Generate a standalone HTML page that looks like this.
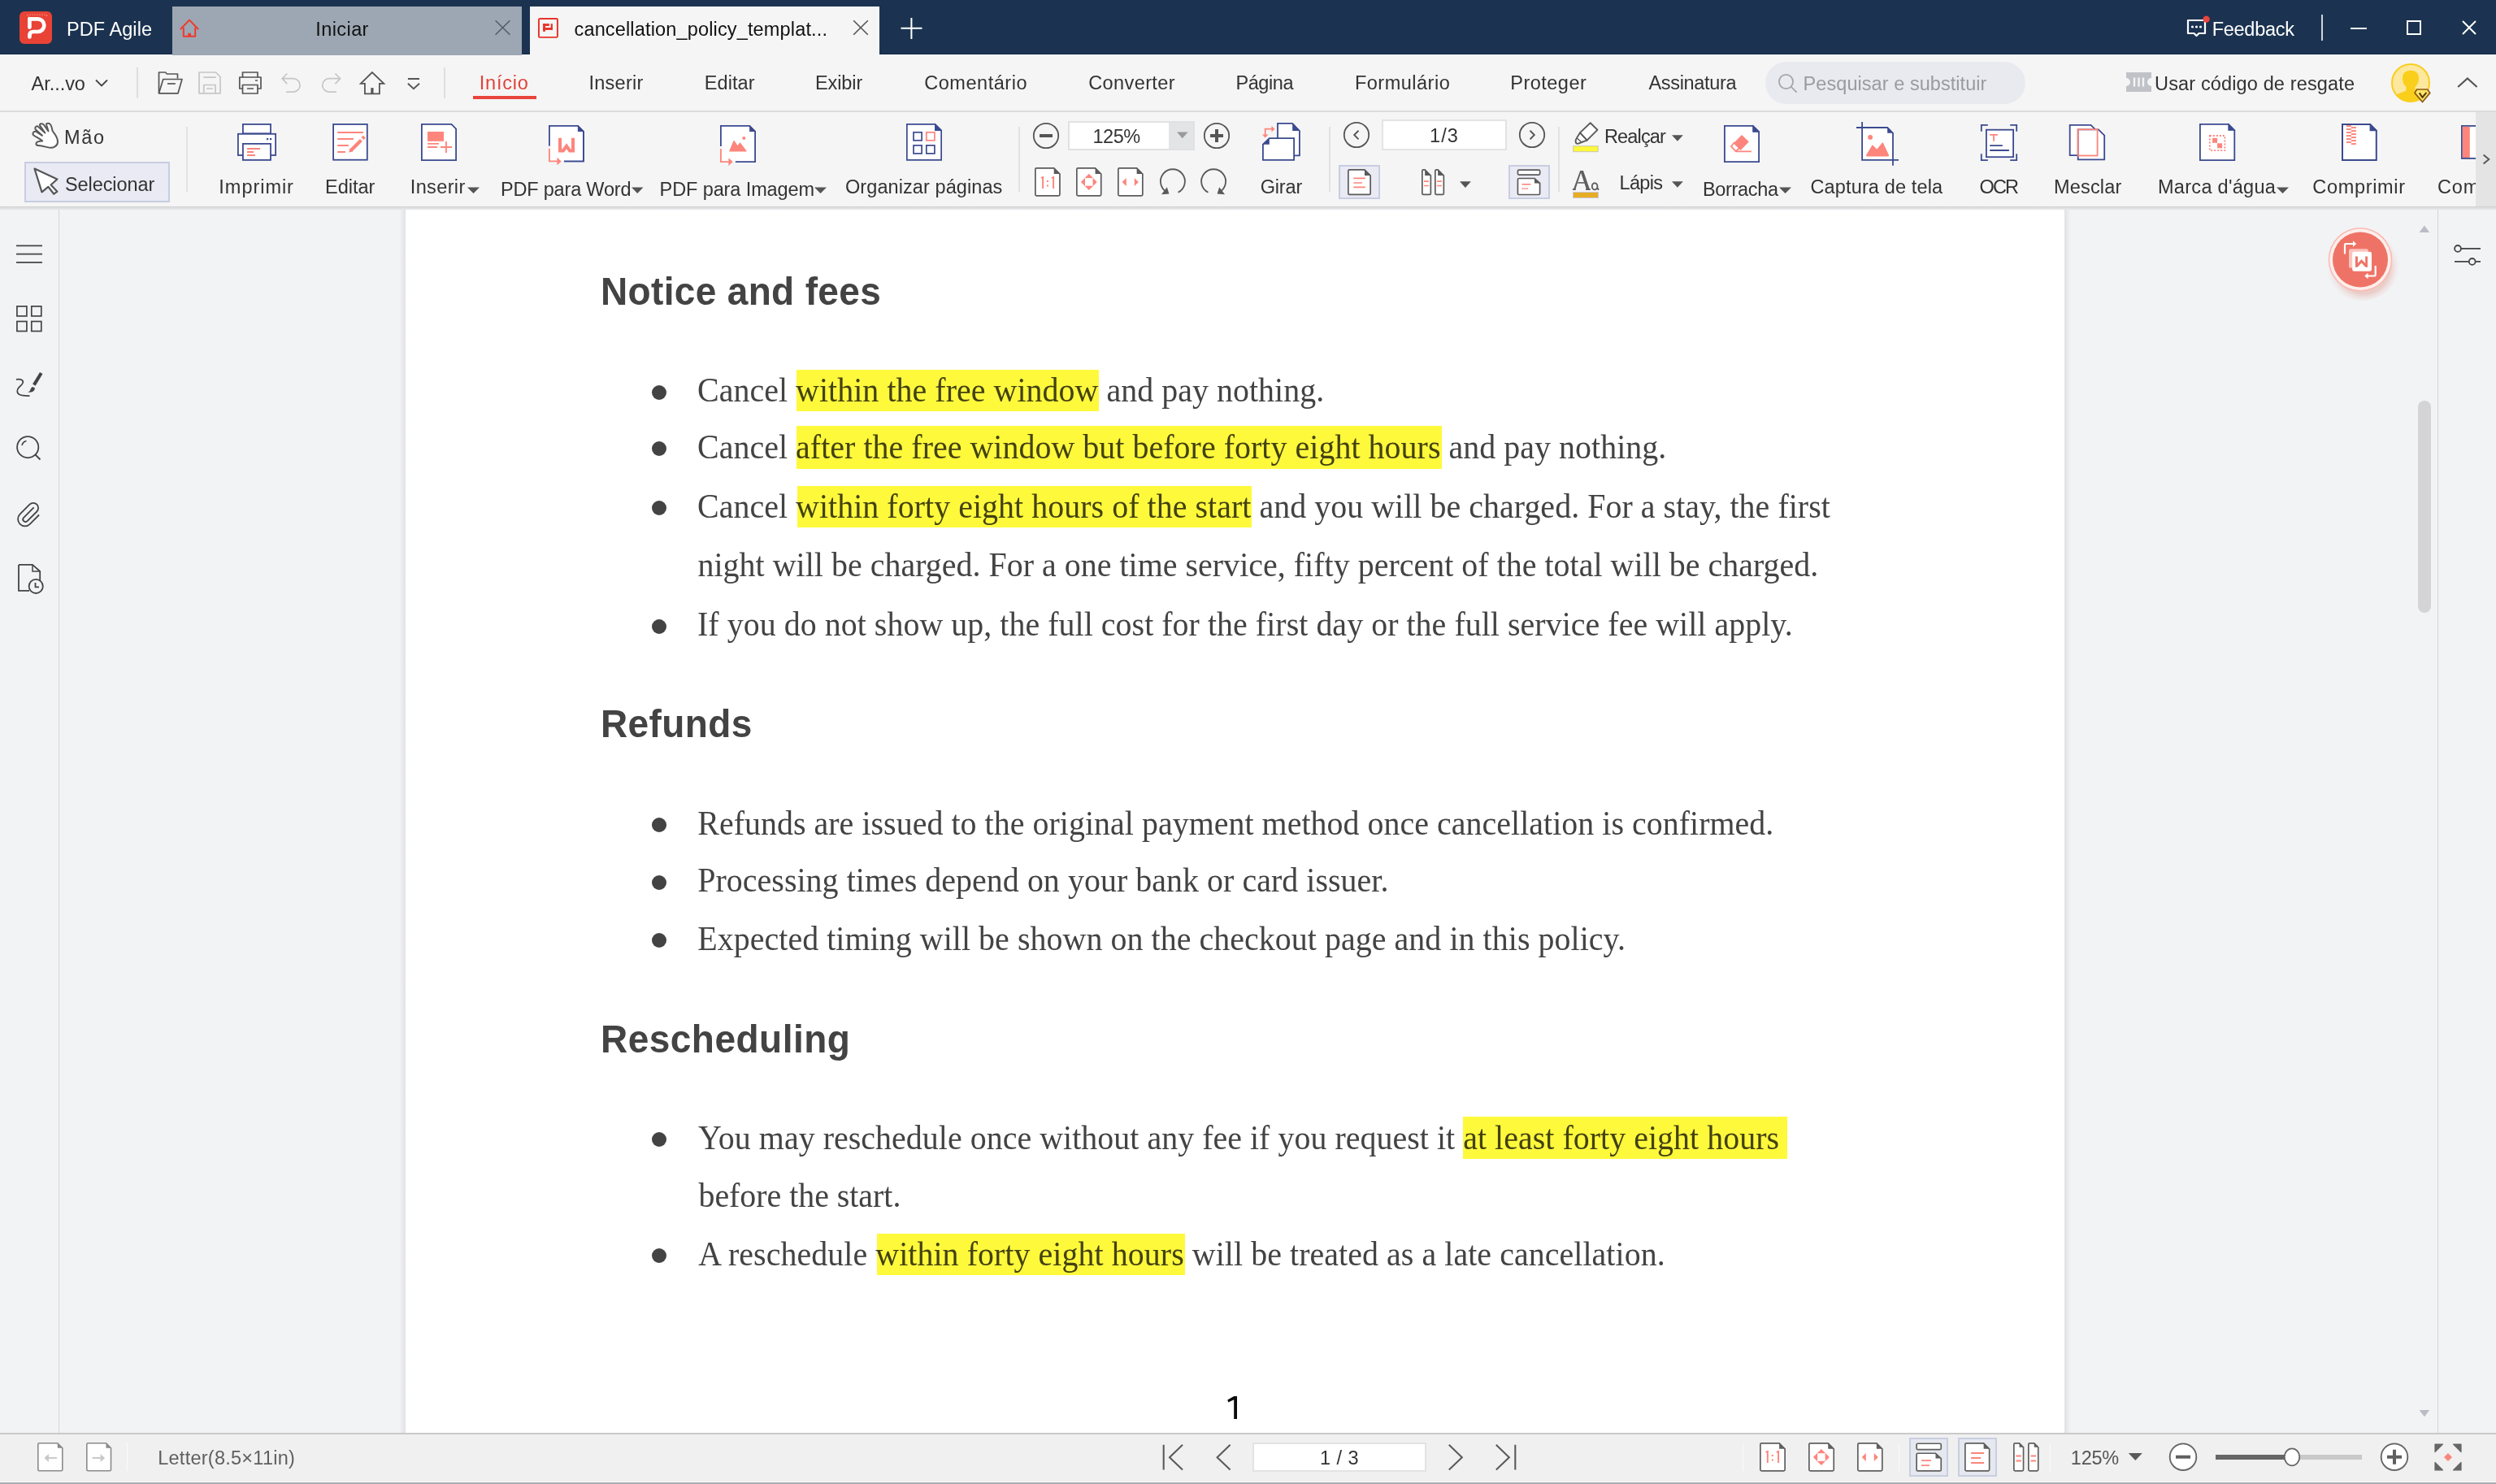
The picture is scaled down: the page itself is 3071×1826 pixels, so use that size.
<!DOCTYPE html>
<html><head><meta charset="utf-8"><style>
html,body{margin:0;padding:0;width:3071px;height:1826px;overflow:hidden;background:#f2f3f5;position:relative}
body>div,body>svg{position:absolute}
svg{overflow:visible}
</style></head><body>
<div style="left:0px;top:0px;width:3071px;height:67px;background:#1b3350;"></div>
<div style="left:0px;top:66px;width:3071px;height:1px;background:#13294a;"></div>
<div style="left:0px;top:67px;width:3071px;height:1px;background:#f0f2f4;"></div>
<svg style="left:24px;top:14px;" width="40" height="40" viewBox="0 0 40 40" fill="none"><rect width="40" height="40" rx="6" fill="#e84335"/><path d="M12.4 9.4 H22.5 A7.8 7.8 0 0 1 22.5 25 H17.2 Q12.4 25 12.4 29.8 V31.4" stroke="#fff" stroke-width="4.7" stroke-linecap="round" stroke-linejoin="round"/><path d="M12.4 9.4 V19.6" stroke="#fff" stroke-width="4.7" stroke-linecap="round"/><g fill="#fff" opacity=".8"><circle cx="10" cy="4.8" r=".6"/><circle cx="13" cy="4" r=".6"/><circle cx="16" cy="4" r=".6"/><circle cx="19" cy="4" r=".6"/><circle cx="22" cy="4" r=".6"/><circle cx="25" cy="4" r=".6"/><circle cx="28" cy="4" r=".6"/><circle cx="31" cy="4" r=".6"/><circle cx="33.5" cy="5.2" r=".6"/><circle cx="11.5" cy="7" r=".6"/></g></svg>
<div style="left:82.00px;top:24.53px;font-family:'Liberation Sans', sans-serif;font-size:23.5px;line-height:23.5px;font-weight:normal;color:#ffffff;white-space:nowrap;letter-spacing:0.062px;">PDF Agile</div>
<div style="left:212px;top:8px;width:430px;height:60px;background:#9da7b3;"></div>
<svg style="left:220px;top:22px;" width="26" height="26" viewBox="0 0 26 26" fill="none"><path d="M2.5 13.5 L13 2.6 L23.6 13.5" stroke="#ee3a2c" stroke-width="2" stroke-linecap="round" stroke-linejoin="round"/><path d="M5.8 12 V22.8 H20.2 V12" stroke="#ee3a2c" stroke-width="2" stroke-linejoin="round"/><rect x="11.2" y="18.8" width="3.8" height="4" fill="#ee3a2c"/></svg>
<div style="left:388.35px;top:24.53px;font-family:'Liberation Sans', sans-serif;font-size:23.5px;line-height:23.5px;font-weight:normal;color:#111111;white-space:nowrap;letter-spacing:0.400px;">Iniciar</div>
<svg style="left:608px;top:24px;" width="21" height="20" viewBox="0 0 21 20" fill="none"><path d="M1.6 1.2 L19.4 18.8 M19.4 1.2 L1.6 18.8" stroke="#555c66" stroke-width="1.6"/></svg>
<div style="left:652px;top:8px;width:430px;height:60px;background:#f5f5f5;"></div>
<svg style="left:661px;top:21px;" width="27" height="27" viewBox="0 0 27 27" fill="none"><rect x="1.95" y="1.95" width="23" height="22.9" rx="1.3" stroke="#e8342a" stroke-width="1.95"/><g fill="#e8342a"><rect x="7.1" y="8.1" width="7.7" height="2.9"/><rect x="7.1" y="8.1" width="2.9" height="9.7"/><rect x="16.7" y="8.1" width="2.2" height="7.8"/><rect x="7.1" y="13" width="11.8" height="2.9"/></g></svg>
<div style="left:706.50px;top:24.53px;font-family:'Liberation Sans', sans-serif;font-size:23.5px;line-height:23.5px;font-weight:normal;color:#111111;white-space:nowrap;letter-spacing:0.155px;">cancellation_policy_templat...</div>
<svg style="left:1049px;top:24px;" width="20" height="20" viewBox="0 0 20 20" fill="none"><path d="M1.2 1.2 L18.8 18.8 M18.8 1.2 L1.2 18.8" stroke="#555" stroke-width="1.6"/></svg>
<svg style="left:1107px;top:21px;" width="29" height="28" viewBox="0 0 29 28" fill="none"><path d="M14.4 1 V27 M1.5 13.8 H27.5" stroke="#fff" stroke-width="2"/></svg>
<svg style="left:2689px;top:19px;" width="30" height="26" viewBox="0 0 30 26" fill="none"><path d="M3 6 H24 V22 H16.5 L13.5 25 L10.5 22 H3 Z" stroke="#fff" stroke-width="2.2" stroke-linejoin="round"/><circle cx="8.5" cy="14" r="1.6" fill="#fff"/><circle cx="13.5" cy="14" r="1.6" fill="#fff"/><circle cx="18.5" cy="14" r="1.6" fill="#fff"/><circle cx="25.6" cy="4.6" r="4.2" fill="#e8453c"/></svg>
<div style="left:2721.70px;top:24.53px;font-family:'Liberation Sans', sans-serif;font-size:23.5px;line-height:23.5px;font-weight:normal;color:#ffffff;white-space:nowrap;letter-spacing:-0.279px;">Feedback</div>
<div style="left:2856px;top:18px;width:2px;height:32px;background:#d0d4da;"></div>
<div style="left:2892px;top:34px;width:20px;height:2px;background:#ffffff;"></div>
<svg style="left:2961px;top:25px;" width="18" height="18" viewBox="0 0 18 18" fill="none"><rect x="1" y="1" width="16" height="16" stroke="#fff" stroke-width="2"/></svg>
<svg style="left:3029px;top:25px;" width="18" height="18" viewBox="0 0 18 18" fill="none"><path d="M1 1 L17 17 M17 1 L1 17" stroke="#fff" stroke-width="2"/></svg>
<div style="left:0px;top:68px;width:3071px;height:68px;background:#f5f5f5;"></div>
<div style="left:0px;top:136px;width:3071px;height:2px;background:#dcdcdc;"></div>
<div style="left:38.50px;top:91.83px;font-family:'Liberation Sans', sans-serif;font-size:23.5px;line-height:23.5px;font-weight:normal;color:#333;white-space:nowrap;letter-spacing:-0.033px;">Ar...vo</div>
<svg style="left:116px;top:96px;" width="18" height="12" viewBox="0 0 18 12" fill="none"><path d="M2 2.5 L9 9.5 L16 2.5" stroke="#444" stroke-width="1.8"/></svg>
<div style="left:168px;top:83px;width:2px;height:38px;background:#dedede;"></div>
<svg style="left:192px;top:86px;" width="36" height="32" viewBox="0 0 36 32" fill="none"><path d="M3.5 28.5 V3 H11.5 L13.5 5 H26.5 V10.5" stroke="#555555" stroke-width="1.7" stroke-linejoin="round"/><path d="M3.5 28.8 L8.8 11.5 H32 L27 28.8 Z" stroke="#555555" stroke-width="1.7" stroke-linejoin="round"/><path d="M14 17 H23.8" stroke="#555555" stroke-width="1.7"/></svg>
<svg style="left:242px;top:86px;" width="32" height="32" viewBox="0 0 32 32" fill="none"><path d="M3 3 H23.5 L29 8.5 V28.8 H3 Z" stroke="#c6c6c6" stroke-width="1.7" stroke-linejoin="round"/><path d="M8.3 9.2 H23.8 M8.8 28.8 V18.5 H23 V28.8 M12 23 H20" stroke="#c6c6c6" stroke-width="1.7"/></svg>
<svg style="left:292px;top:86px;" width="32" height="32" viewBox="0 0 32 32" fill="none"><path d="M6.5 9.5 V3 H25 V9.5" stroke="#555555" stroke-width="1.7" stroke-linejoin="round"/><path d="M6.5 23 H2.8 V9 H29 V23 H25" stroke="#555555" stroke-width="1.7" stroke-linejoin="round"/><path d="M6.5 18.5 H25 V29 H6.5 Z" stroke="#555555" stroke-width="1.7" stroke-linejoin="round"/><path d="M12 23 H20 M22 13 H25" stroke="#555555" stroke-width="1.7"/></svg>
<svg style="left:340px;top:86px;" width="30" height="32" viewBox="0 0 30 32" fill="none"><path d="M13.3 4.5 L7.2 10.7 L13.3 17.2 M7.2 10.7 H20.9 A8.2 8.2 0 0 1 20.9 27.1 H12.3" stroke="#c6c6c6" stroke-width="1.7"/></svg>
<svg style="left:390px;top:86px;" width="32" height="32" viewBox="0 0 32 32" fill="none"><path d="M22.4 4.5 L28.6 10.7 L22.4 17.2 M28.6 10.7 H14.9 A8.2 8.2 0 0 0 14.9 27.1 H23.9" stroke="#c6c6c6" stroke-width="1.7"/></svg>
<svg style="left:440px;top:86px;" width="36" height="32" viewBox="0 0 36 32" fill="none"><path d="M3.8 16.9 L17.9 3 L32.3 16.9 H26.9 V29.3 H8.9 V16.9 Z" stroke="#555555" stroke-width="1.8" stroke-linejoin="miter"/><rect x="16.3" y="22.1" width="3.2" height="7.2" fill="#555555"/></svg>
<svg style="left:498px;top:90px;" width="22" height="24" viewBox="0 0 22 24" fill="none"><path d="M3.9 7 H18 M3.9 12.7 L10.9 19.2 L18 12.7" stroke="#555555" stroke-width="1.9"/></svg>
<div style="left:546px;top:83px;width:2px;height:38px;background:#dedede;"></div>
<div style="left:589.75px;top:90.53px;font-family:'Liberation Sans', sans-serif;font-size:23.5px;line-height:23.5px;font-weight:normal;color:#e0443a;white-space:nowrap;letter-spacing:0.790px;">Início</div>
<div style="left:582px;top:118px;width:78px;height:4px;background:#e8453c;"></div>
<div style="left:724.45px;top:90.53px;font-family:'Liberation Sans', sans-serif;font-size:23.5px;line-height:23.5px;font-weight:normal;color:#333;white-space:nowrap;letter-spacing:0.275px;">Inserir</div>
<div style="left:866.80px;top:90.53px;font-family:'Liberation Sans', sans-serif;font-size:23.5px;line-height:23.5px;font-weight:normal;color:#333;white-space:nowrap;letter-spacing:0.060px;">Editar</div>
<div style="left:1003.00px;top:90.53px;font-family:'Liberation Sans', sans-serif;font-size:23.5px;line-height:23.5px;font-weight:normal;color:#333;white-space:nowrap;letter-spacing:-0.100px;">Exibir</div>
<div style="left:1137.25px;top:90.53px;font-family:'Liberation Sans', sans-serif;font-size:23.5px;line-height:23.5px;font-weight:normal;color:#333;white-space:nowrap;letter-spacing:0.528px;">Comentário</div>
<div style="left:1339.15px;top:90.53px;font-family:'Liberation Sans', sans-serif;font-size:23.5px;line-height:23.5px;font-weight:normal;color:#333;white-space:nowrap;letter-spacing:0.412px;">Converter</div>
<div style="left:1520.40px;top:90.53px;font-family:'Liberation Sans', sans-serif;font-size:23.5px;line-height:23.5px;font-weight:normal;color:#333;white-space:nowrap;letter-spacing:-0.420px;">Página</div>
<div style="left:1666.90px;top:90.53px;font-family:'Liberation Sans', sans-serif;font-size:23.5px;line-height:23.5px;font-weight:normal;color:#333;white-space:nowrap;letter-spacing:0.506px;">Formulário</div>
<div style="left:1858.30px;top:90.53px;font-family:'Liberation Sans', sans-serif;font-size:23.5px;line-height:23.5px;font-weight:normal;color:#333;white-space:nowrap;letter-spacing:0.479px;">Proteger</div>
<div style="left:2028.50px;top:90.53px;font-family:'Liberation Sans', sans-serif;font-size:23.5px;line-height:23.5px;font-weight:normal;color:#333;white-space:nowrap;letter-spacing:-0.333px;">Assinatura</div>
<div style="left:2172px;top:76px;width:320px;height:52px;background:#e9eaf0;border-radius:26px;"></div>
<svg style="left:2186px;top:89px;" width="28" height="28" viewBox="0 0 28 28" fill="none"><circle cx="11.5" cy="11.5" r="8.6" stroke="#a4a6ad" stroke-width="1.8"/><path d="M17.6 17.6 L24.6 24.6" stroke="#a4a6ad" stroke-width="1.9"/></svg>
<div style="left:2218.60px;top:91.62px;font-family:'Liberation Sans', sans-serif;font-size:23.5px;line-height:23.5px;font-weight:normal;color:#9a9a9f;white-space:nowrap;letter-spacing:0.055px;">Pesquisar e substituir</div>
<svg style="left:2614px;top:87px;" width="36" height="28" viewBox="0 0 36 28" fill="none"><path d="M2 2 H33 V9 A5 5 0 0 0 33 19 V26 H2 V19 A5 5 0 0 0 2 9 Z" fill="#c0c2c8"/><path d="M12 8.5 V19.5 M17.5 8.5 V19.5 M23 8.5 V19.5" stroke="#f5f5f5" stroke-width="2.4"/></svg>
<div style="left:2651.05px;top:91.83px;font-family:'Liberation Sans', sans-serif;font-size:23.5px;line-height:23.5px;font-weight:normal;color:#333;white-space:nowrap;letter-spacing:0.140px;">Usar código de resgate</div>
<svg style="left:2940px;top:76px;" width="54" height="54" viewBox="0 0 54 54" fill="none"><defs><pattern id="dp" width="2.9" height="2.9" patternUnits="userSpaceOnUse"><circle cx="1.45" cy="1.45" r=".5" fill="#f9d867"/></pattern><clipPath id="avc"><circle cx="26" cy="26" r="23"/></clipPath></defs><circle cx="26" cy="26" r="23" fill="#fde9a3" stroke="#f9cd1d" stroke-width="2"/><circle cx="26" cy="26" r="22" fill="url(#dp)"/><path clip-path="url(#avc)" d="M20.5 35.4 V31 C17 28 16 24 16 20 C16 14 20 10.8 26 10.8 C32 10.8 36 14 36 20 C36 24 35 28 31.5 31 V35.4 L46 40 L48 54 H4 L6 41.5 Z" fill="#f9cf1c"/><path d="M33.6 34 H46.6 L49.8 38.4 L40.5 49.5 L31 38.4 Z" fill="#fde46a" stroke="#8b5a10" stroke-width="1.7" stroke-linejoin="round"/><path d="M36.7 38.3 L40.5 43.8 L45.4 37.8" stroke="#5b3a08" stroke-width="2.1" fill="none"/></svg>
<svg style="left:3022px;top:94px;" width="28" height="16" viewBox="0 0 28 16" fill="none"><path d="M2.2 13 L13.9 2.4 L25.6 13" stroke="#555" stroke-width="2.2"/></svg>
<div style="left:0px;top:138px;width:3071px;height:116px;background:#f5f5f5;"></div>
<div style="left:0px;top:254px;width:3071px;height:1px;background:#d0d0d0;"></div>
<div style="left:0;top:255px;width:3071px;height:3px;background:linear-gradient(#dcdddf,#e6e7e9)"></div>
<svg style="left:36px;top:146px;" width="40" height="40" viewBox="0 0 40 40" fill="none"><path d="M22.9 5.8 C26 5 27.5 9 28.6 15.1 C30 17.5 35 22 35 28.5 C35 33.5 30 36 25.6 35.8 C22 35.6 18 33.6 13.5 33.2 C10 33 8.4 33 8.4 31 C8.4 28.5 11.5 27.5 16.2 27.5 C13 24.5 8 22.5 5.4 20.5 C3.5 18.8 4.8 15 8.5 16 L15.9 20.8 L7.5 12.9 C6.5 10.5 9 8.5 10.8 9.7 L19.4 17.5 L12.9 8.1 C12.5 6.2 16 5.5 17.8 7.5 L23.5 15.4 L21 7.3 C20.8 6.3 21.8 5.8 22.9 5.8 Z" fill="#fff" stroke="#5a5a5a" stroke-width="2" stroke-linejoin="round"/></svg>
<div style="left:79.00px;top:158.03px;font-family:'Liberation Sans', sans-serif;font-size:23.5px;line-height:23.5px;font-weight:normal;color:#333;white-space:nowrap;letter-spacing:1.625px;">Mão</div>
<div style="left:30px;top:199px;width:179px;height:50px;background:#e9eaf3;box-sizing:border-box;border:2px solid #c8cde2;"></div>
<svg style="left:38px;top:204px;" width="36" height="38" viewBox="0 0 36 38" fill="none"><path d="M4.5 3.5 L32.4 16.5 L24.6 23.5 L32.4 31.7 L28.3 34.7 L21.3 25.8 L13.5 32.4 Z" fill="#fff" stroke="#555" stroke-width="2.2" stroke-linejoin="round"/></svg>
<div style="left:80.00px;top:215.83px;font-family:'Liberation Sans', sans-serif;font-size:23.5px;line-height:23.5px;font-weight:normal;color:#333;white-space:nowrap;letter-spacing:-0.083px;">Selecionar</div>
<div style="left:229px;top:156px;width:2px;height:80px;background:#e2e2e2;"></div>
<svg style="left:290px;top:150px;" width="52" height="50" viewBox="0 0 52 50" fill="none"><rect x="8.9" y="2.9" width="34.1" height="11.4" fill="#fff" stroke="#3b4a8f" stroke-width="1.8"/><rect x="2.9" y="14.8" width="46.2" height="26.2" fill="#fff" stroke="#3b4a8f" stroke-width="1.8"/><rect x="8.9" y="26.9" width="34.1" height="20" fill="#fff" stroke="#3b4a8f" stroke-width="1.8"/><rect x="38" y="20" width="2.2" height="2.2" fill="#3b4a8f"/><rect x="42" y="20" width="2.2" height="2.2" fill="#3b4a8f"/><path d="M14 33 H30 M14 37 H22 M14 41 H24" stroke="#fd857c" stroke-width="1.9"/></svg>
<div style="left:269.35px;top:219.22px;font-family:'Liberation Sans', sans-serif;font-size:23.5px;line-height:23.5px;font-weight:normal;color:#333;white-space:nowrap;letter-spacing:0.964px;">Imprimir</div>
<svg style="left:406px;top:150px;" width="50" height="50" viewBox="0 0 50 50" fill="none"><rect x="4.1" y="2.9" width="41.7" height="43.8" fill="#fff" stroke="#3b4a8f" stroke-width="1.8"/><path d="M9.2 12.9 H40.9 M9.2 21 H28.9 M9.2 28.9 H22.9 M9.2 37 H18.9" stroke="#fd857c" stroke-width="2"/><path d="M25.6 35.2 L38.4 22.4" stroke="#fd857c" stroke-width="4.2"/><path d="M23.2 37.6 L24.4 32.6 L28.2 36.4 Z" fill="#fd857c"/><path d="M40 20.6 L42.4 18.2" stroke="#fd857c" stroke-width="4.2"/></svg>
<div style="left:400.00px;top:219.22px;font-family:'Liberation Sans', sans-serif;font-size:23.5px;line-height:23.5px;font-weight:normal;color:#333;white-space:nowrap;letter-spacing:0.000px;">Editar</div>
<svg style="left:516px;top:150px;" width="48" height="50" viewBox="0 0 48 50" fill="none"><path d="M2.8999999999999773 2.9000000000000057 H39.50000000000002 L45.10000000000002 8.500000000000005 V47.099999999999994 H2.8999999999999773 Z" fill="#fff" stroke="#3b4a8f" stroke-width="1.8" stroke-linejoin="miter"/><rect x="10" y="12" width="20" height="11.8" fill="#fd857c"/><path d="M10 26.900000000000006 H24 M10 31 H22 M26 31 H40 M32.89999999999998 24 V38" stroke="#fd857c" stroke-width="1.9"/></svg>
<div style="left:504.75px;top:219.22px;font-family:'Liberation Sans', sans-serif;font-size:23.5px;line-height:23.5px;font-weight:normal;color:#333;white-space:nowrap;letter-spacing:0.375px;">Inserir</div>
<svg style="left:574.5px;top:230px;" width="15.0" height="9" viewBox="0 0 15.0 9" fill="none"><path d="M0 0.5 H15.0 L7.5 8 Z" fill="#555"/></svg>
<svg style="left:673px;top:152.3px;" width="49.799999999999955" height="53.29999999999998" viewBox="0 0 49.799999999999955 53.29999999999998" fill="none"><path d="M2.8999999999999773 2.9000000000000057 H37.89999999999998 L44.89999999999998 9.900000000000006 V46.39999999999998 H20.899999999999977" fill="none" stroke="#3b4a8f" stroke-width="1.8"/><path d="M1.9999999999999774 2.9000000000000057 H37.89999999999998 L44.89999999999998 9.900000000000006 V46.39999999999998 H2.8999999999999773 Z" fill="#fff" stroke="none"/><path d="M2.8999999999999773 2.9000000000000057 H37.89999999999998 L44.89999999999998 9.900000000000006 V46.39999999999998 H20.899999999999977" fill="none" stroke="#3b4a8f" stroke-width="1.8"/><path d="M2.8999999999999773 2.0000000000000058 V27.649999999999977" stroke="#3b4a8f" stroke-width="1.8"/><path d="M37.89999999999998 2.9000000000000057 L44.89999999999998 9.900000000000006 H37.89999999999998 Z" fill="#3b4a8f"/><path d="M2.8999999999999773 30.649999999999977 V46.39999999999998 H12.899999999999977" stroke="#fd857c" stroke-width="1.8"/><path d="M12.399999999999977 41.799999999999976 L17.699999999999978 46.39999999999998 L12.399999999999977 51.199999999999974 Z" fill="#fd857c"/><path d="M16 17.69999999999999 V33.5 H20 L24 27.69999999999999 L28 33.5 H32 V17.69999999999999" stroke="#fd857c" stroke-width="4" fill="none" stroke-linejoin="miter"/></svg>
<div style="left:615.90px;top:221.53px;font-family:'Liberation Sans', sans-serif;font-size:23.5px;line-height:23.5px;font-weight:normal;color:#333;white-space:nowrap;letter-spacing:-0.179px;">PDF para Word</div>
<svg style="left:776.5px;top:230px;" width="14.5" height="9" viewBox="0 0 14.5 9" fill="none"><path d="M0 0.5 H14.5 L7.25 8 Z" fill="#555"/></svg>
<svg style="left:884px;top:152px;" width="50" height="54" viewBox="0 0 50 54" fill="none"><path d="M2.8999999999999773 2.9000000000000057 H38.10000000000002 L45.10000000000002 9.900000000000006 V47.099999999999994 H20.899999999999977" fill="none" stroke="#3b4a8f" stroke-width="1.8"/><path d="M1.9999999999999774 2.9000000000000057 H38.10000000000002 L45.10000000000002 9.900000000000006 V47.099999999999994 H2.8999999999999773 Z" fill="#fff" stroke="none"/><path d="M2.8999999999999773 2.9000000000000057 H38.10000000000002 L45.10000000000002 9.900000000000006 V47.099999999999994 H20.899999999999977" fill="none" stroke="#3b4a8f" stroke-width="1.8"/><path d="M2.8999999999999773 2.0000000000000058 V28.0" stroke="#3b4a8f" stroke-width="1.8"/><path d="M38.10000000000002 2.9000000000000057 L45.10000000000002 9.900000000000006 H38.10000000000002 Z" fill="#3b4a8f"/><path d="M2.8999999999999773 31.0 V47.099999999999994 H12.899999999999977" stroke="#fd857c" stroke-width="1.8"/><path d="M12.399999999999977 42.49999999999999 L17.699999999999978 47.099999999999994 L12.399999999999977 51.89999999999999 Z" fill="#fd857c"/><path d="M13.799999999999955 33.900000000000006 L19 21.599999999999994 L23.5 28 L26.5 24 L34 33.900000000000006 Z" fill="#fd857c" stroke="#fd857c" stroke-width="1.2" stroke-linejoin="round"/><circle cx="31.299999999999955" cy="17.900000000000006" r="2" fill="#fd857c"/></svg>
<div style="left:811.60px;top:221.53px;font-family:'Liberation Sans', sans-serif;font-size:23.5px;line-height:23.5px;font-weight:normal;color:#333;white-space:nowrap;letter-spacing:-0.107px;">PDF para Imagem</div>
<svg style="left:1001.5px;top:230px;" width="15.0" height="9" viewBox="0 0 15.0 9" fill="none"><path d="M0 0.5 H15.0 L7.5 8 Z" fill="#555"/></svg>
<svg style="left:1113px;top:150.2px;" width="48" height="49.80000000000001" viewBox="0 0 48 49.80000000000001" fill="none"><path d="M2.849999999999909 2.8499999999999943 H37.55000000000009 L45.15000000000009 10.449999999999994 V46.95000000000002 H2.849999999999909 Z" fill="#fff" stroke="#3b4a8f" stroke-width="1.7" stroke-linejoin="miter"/><path d="M37.55000000000009 2.8499999999999943 L45.15000000000009 10.449999999999994 H37.55000000000009 Z" fill="#3b4a8f" stroke="#3b4a8f" stroke-width="1.02" stroke-linejoin="miter"/><rect x="11" y="12.800000000000011" width="10.1" height="10" stroke="#3b4a8f" stroke-width="1.7"/><rect x="26.799999999999955" y="12.800000000000011" width="10.1" height="10" stroke="#fd857c" stroke-width="1.7"/><rect x="11" y="28.900000000000006" width="10.1" height="10" stroke="#3b4a8f" stroke-width="1.7"/><rect x="26.799999999999955" y="28.900000000000006" width="10.1" height="10" stroke="#3b4a8f" stroke-width="1.7"/></svg>
<div style="left:1040.00px;top:219.22px;font-family:'Liberation Sans', sans-serif;font-size:23.5px;line-height:23.5px;font-weight:normal;color:#333;white-space:nowrap;letter-spacing:0.078px;">Organizar páginas</div>
<div style="left:1253px;top:156px;width:2px;height:80px;background:#e2e2e2;"></div>
<svg style="left:1269px;top:149px;" width="36" height="36" viewBox="0 0 36 36" fill="none"><circle cx="18" cy="18" r="15.2" fill="none" stroke="#555" stroke-width="1.8"/><path d="M10 18 H26" stroke="#555" stroke-width="4"/></svg>
<div style="left:1314px;top:149px;width:156px;height:36px;background:#e3e4e6;box-sizing:border-box;border:2px solid #e1e1e3;"></div>
<div style="left:1316px;top:151px;width:122px;height:32px;background:#ffffff;"></div>
<svg style="left:1448px;top:162px;" width="14" height="9" viewBox="0 0 14 9" fill="none"><path d="M0 0.5 H13.6 L6.8 8.2 Z" fill="#9a9a9a"/></svg>
<div style="left:1344.55px;top:156.83px;font-family:'Liberation Sans', sans-serif;font-size:23.5px;line-height:23.5px;font-weight:normal;color:#333;white-space:nowrap;letter-spacing:-0.500px;">125%</div>
<svg style="left:1479px;top:149px;" width="36" height="36" viewBox="0 0 36 36" fill="none"><circle cx="18" cy="18" r="15.2" fill="none" stroke="#555" stroke-width="1.8"/><path d="M10 18 H26 M18 10 V26" stroke="#555" stroke-width="4"/></svg>
<svg style="left:1271.1px;top:204px;" width="35.80000000000018" height="39.69999999999999" viewBox="0 0 35.80000000000018 39.69999999999999" fill="none"><path d="M4.349999999999909 2.8499999999999943 H25.750000000000274 L32.95000000000027 10.049999999999994 V35.349999999999994 Q32.95000000000027 36.849999999999994 31.450000000000273 36.849999999999994 H4.349999999999909 Q2.849999999999909 36.849999999999994 2.849999999999909 35.349999999999994 V4.349999999999994 Q2.849999999999909 2.8499999999999943 4.349999999999909 2.8499999999999943 Z" fill="#fff" stroke="#5a5a5a" stroke-width="1.7"/><path d="M25.750000000000274 2.8499999999999943 L32.95000000000027 10.049999999999994 H25.750000000000274 Z" fill="#5a5a5a"/><path d="M9.900000000000091 15 L12.100000000000136 14 V28 M22.90000000000009 15 L25.100000000000136 14 V28" stroke="#fd857c" stroke-width="1.9"/><rect x="16.90000000000009" y="18" width="2" height="2" fill="#fd857c"/><rect x="16.90000000000009" y="23.5" width="2" height="2" fill="#fd857c"/></svg>
<svg style="left:1322.2px;top:204px;" width="35.59999999999991" height="39.69999999999999" viewBox="0 0 35.59999999999991 39.69999999999999" fill="none"><path d="M4.349999999999909 2.8499999999999943 H25.55 L32.75 10.049999999999994 V35.349999999999994 Q32.75 36.849999999999994 31.25 36.849999999999994 H4.349999999999909 Q2.849999999999909 36.849999999999994 2.849999999999909 35.349999999999994 V4.349999999999994 Q2.849999999999909 2.8499999999999943 4.349999999999909 2.8499999999999943 Z" fill="#fff" stroke="#5a5a5a" stroke-width="1.7"/><path d="M25.55 2.8499999999999943 L32.75 10.049999999999994 H25.55 Z" fill="#5a5a5a"/><path d="M17.799999999999955 9.800000000000011 L27.700000000000045 19.900000000000006 L17.799999999999955 30 L7.899999999999864 19.900000000000006 Z" fill="#fd857c"/><rect x="13.0" y="15.099999999999994" width="9.6" height="9.6" fill="#fff"/></svg>
<svg style="left:1373.2px;top:204px;" width="35.700000000000045" height="39.69999999999999" viewBox="0 0 35.700000000000045 39.69999999999999" fill="none"><path d="M4.349999999999909 2.8499999999999943 H25.650000000000137 L32.850000000000136 10.049999999999994 V35.349999999999994 Q32.850000000000136 36.849999999999994 31.350000000000136 36.849999999999994 H4.349999999999909 Q2.849999999999909 36.849999999999994 2.849999999999909 35.349999999999994 V4.349999999999994 Q2.849999999999909 2.8499999999999943 4.349999999999909 2.8499999999999943 Z" fill="#fff" stroke="#5a5a5a" stroke-width="1.7"/><path d="M25.650000000000137 2.8499999999999943 L32.850000000000136 10.049999999999994 H25.650000000000137 Z" fill="#5a5a5a"/><path d="M12.799999999999955 15 L7.599999999999909 20 L12.799999999999955 25 Z M22.799999999999955 15 L27.799999999999955 20 L22.799999999999955 25 Z" fill="#fd857c"/></svg>
<svg style="left:1424px;top:205px;" width="38" height="38" viewBox="0 0 38 38" fill="none"><path d="M12.3 31.7 A15 15 0 1 1 25.5 31.7" stroke="#5a5a5a" stroke-width="1.8" fill="none"/><path d="M5 34.3 L14.4 33.4 L11.8 25.2 Z" fill="#5a5a5a"/></svg>
<svg style="left:1474px;top:205px;" width="38" height="38" viewBox="0 0 38 38" fill="none"><path d="M25.7 31.7 A15 15 0 1 0 12.5 31.7" stroke="#5a5a5a" stroke-width="1.8" fill="none"/><path d="M33 34.3 L23.6 33.4 L26.2 25.2 Z" fill="#5a5a5a"/></svg>
<svg style="left:1550px;top:148px;" width="54" height="54" viewBox="0 0 54 54" fill="none"><path d="M22 3.9 H40.2 L48.9 13 V43.4 H22 Z" fill="#fff" stroke="#3b4a8f" stroke-width="1.8"/><path d="M40.2 3.9 L48.9 13 H40.2 Z" fill="#3b4a8f"/><path d="M11.8 22.1 H42.1 V48.9 H3.9 V29.7 Z" fill="#fff" stroke="#3b4a8f" stroke-width="1.8"/><path d="M3.9 29.7 L11.8 22.1 V29.7 Z" fill="#3b4a8f"/><path d="M6.7 18 V10.7 H15" stroke="#fd857c" stroke-width="1.8"/><path d="M14.5 7 L18.5 10.7 L14.5 14.4 Z M2.9 17.5 L6.7 21.6 L10.5 17.5 Z" fill="#fd857c"/></svg>
<div style="left:1550.75px;top:218.83px;font-family:'Liberation Sans', sans-serif;font-size:23.5px;line-height:23.5px;font-weight:normal;color:#333;white-space:nowrap;letter-spacing:-0.188px;">Girar</div>
<div style="left:1635px;top:156px;width:2px;height:80px;background:#e2e2e2;"></div>
<svg style="left:1651px;top:148px;" width="36" height="36" viewBox="0 0 36 36" fill="none"><circle cx="18" cy="18" r="15.2" stroke="#555" stroke-width="1.8"/><path d="M20.5 12.8 L15.2 18 L20.5 23.4" stroke="#555" stroke-width="1.9"/></svg>
<div style="left:1699.6px;top:147.3px;width:154.8px;height:37.3px;background:#ffffff;box-sizing:border-box;border:2px solid #e3e3e3;"></div>
<div style="left:1759.05px;top:156.22px;font-family:'Liberation Sans', sans-serif;font-size:23.5px;line-height:23.5px;font-weight:normal;color:#333;white-space:nowrap;letter-spacing:1.075px;">1/3</div>
<svg style="left:1867px;top:148px;" width="36" height="36" viewBox="0 0 36 36" fill="none"><circle cx="18" cy="18" r="15.2" stroke="#555" stroke-width="1.8"/><path d="M15.5 12.8 L20.8 18 L15.5 23.4" stroke="#555" stroke-width="1.9"/></svg>
<div style="left:1647.3px;top:202.6px;width:50.3px;height:42.9px;background:#e9eaf3;box-sizing:border-box;border:2px solid #c8cde2;"></div>
<svg style="left:1655.5px;top:205.9px;" width="33.0" height="36.29999999999998" viewBox="0 0 33.0 36.29999999999998" fill="none"><path d="M4.349999999999909 2.8499999999999943 H22.95000000000009 L30.15000000000009 10.049999999999994 V31.94999999999999 Q30.15000000000009 33.44999999999999 28.65000000000009 33.44999999999999 H4.349999999999909 Q2.849999999999909 33.44999999999999 2.849999999999909 31.94999999999999 V4.349999999999994 Q2.849999999999909 2.8499999999999943 4.349999999999909 2.8499999999999943 Z" fill="#fff" stroke="#5a5a5a" stroke-width="1.7"/><path d="M22.95000000000009 2.8499999999999943 L30.15000000000009 10.049999999999994 H22.95000000000009 Z" fill="#5a5a5a"/><path d="M9.299999999999955 13.400000000000006 H23.799999999999955 M9.299999999999955 19.0 H20.0 M9.299999999999955 24.400000000000006 H23.799999999999955" stroke="#fd857c" stroke-width="1.7"/></svg>
<svg style="left:1746.6px;top:205.9px;" width="16.200000000000045" height="36.29999999999998" viewBox="0 0 16.200000000000045 36.29999999999998" fill="none"><path d="M4.349999999999909 2.8499999999999943 H6.150000000000136 L13.350000000000136 10.049999999999994 V31.94999999999999 Q13.350000000000136 33.44999999999999 11.850000000000136 33.44999999999999 H4.349999999999909 Q2.849999999999909 33.44999999999999 2.849999999999909 31.94999999999999 V4.349999999999994 Q2.849999999999909 2.8499999999999943 4.349999999999909 2.8499999999999943 Z" fill="#fff" stroke="#5a5a5a" stroke-width="1.7"/><path d="M6.150000000000136 2.8499999999999943 L13.350000000000136 10.049999999999994 H6.150000000000136 Z" fill="#5a5a5a"/><path d="M4.900000000000091 17.099999999999994 H10.900000000000091 M4.900000000000091 22.5 H10.900000000000091" stroke="#fd857c" stroke-width="1.6"/></svg>
<svg style="left:1763px;top:205.9px;" width="16.200000000000045" height="36.29999999999998" viewBox="0 0 16.200000000000045 36.29999999999998" fill="none"><path d="M4.349999999999909 2.8499999999999943 H6.150000000000136 L13.350000000000136 10.049999999999994 V31.94999999999999 Q13.350000000000136 33.44999999999999 11.850000000000136 33.44999999999999 H4.349999999999909 Q2.849999999999909 33.44999999999999 2.849999999999909 31.94999999999999 V4.349999999999994 Q2.849999999999909 2.8499999999999943 4.349999999999909 2.8499999999999943 Z" fill="#fff" stroke="#5a5a5a" stroke-width="1.7"/><path d="M6.150000000000136 2.8499999999999943 L13.350000000000136 10.049999999999994 H6.150000000000136 Z" fill="#5a5a5a"/><path d="M5 17.099999999999994 H11 M5 22.5 H11" stroke="#fd857c" stroke-width="1.6"/></svg>
<svg style="left:1796px;top:223px;" width="14" height="9" viewBox="0 0 14 9" fill="none"><path d="M0 0.3 H13.8 L6.9 8 Z" fill="#555"/></svg>
<div style="left:1856.4px;top:202.6px;width:50.5px;height:42.9px;background:#e9eaf3;box-sizing:border-box;border:2px solid #c8cde2;"></div>
<svg style="left:1864px;top:206px;" width="34" height="36" viewBox="0 0 34 36" fill="none"><rect x="3.45" y="3.05" width="27.2" height="6" rx="1.5" fill="#fff" stroke="#5a5a5a" stroke-width="1.7"/><path d="M4.9 13.5 H24 L30.6 19.5 V32 Q30.6 33.5 29.1 33.5 H4.9 Q3.45 33.5 3.45 32 V15 Q3.45 13.5 4.9 13.5 Z" fill="#fff" stroke="#5a5a5a" stroke-width="1.7"/><path d="M24 13.5 L30.6 19.5 H24 Z" fill="#5a5a5a"/><path d="M8.5 20.8 H19.5" stroke="#fd857c" stroke-width="1.6"/><path d="M8.5 26.1 H16" stroke="#fd857c" stroke-width="1.6" stroke-dasharray="1.4 .6"/></svg>
<div style="left:1917px;top:156px;width:2px;height:80px;background:#e2e2e2;"></div>
<svg style="left:1932px;top:148px;" width="38" height="42" viewBox="0 0 38 42" fill="none"><path d="M11.9 15.4 L24.7 3.2 L33.4 11.8 L20.6 24.6 Z" fill="#fff" stroke="#5a5a5a" stroke-width="1.9" stroke-linejoin="round"/><path d="M11.9 15.4 L20.6 24.6 L14 27 L10 28.6 Q7 29.2 6.6 26.5 Q6.4 24 8 21.8 Z" fill="#fff" stroke="#5a5a5a" stroke-width="1.9" stroke-linejoin="round"/><path d="M8.2 22 L14 27" stroke="#5a5a5a" stroke-width="1.5"/><rect x="3.7" y="31.7" width="30.5" height="7" fill="#fdf838" stroke="#c9c9b8" stroke-width="1"/></svg>
<div style="left:1974.00px;top:156.93px;font-family:'Liberation Sans', sans-serif;font-size:23.5px;line-height:23.5px;font-weight:normal;color:#333;white-space:nowrap;letter-spacing:-0.858px;">Realçar</div>
<svg style="left:2057px;top:166px;" width="14" height="9" viewBox="0 0 14 9" fill="none"><path d="M0 0.3 H13.8 L6.9 7.8 Z" fill="#555"/></svg>
<svg style="left:1930px;top:205px;" width="42" height="42" viewBox="0 0 42 42" fill="none"><path d="M5.6 28.8 L14.2 5.1 H16 L8.1 28.8 Z M14.2 5.1 H18 L26.2 28.8 H22.2 Z" fill="#5f5f5f"/><rect x="11.3" y="19.1" width="8.7" height="1.6" fill="#5f5f5f"/><rect x="4.9" y="27.1" width="3.9" height="1.8" fill="#5f5f5f"/><rect x="21" y="27.1" width="5.8" height="1.8" fill="#5f5f5f"/><rect x="14" y="5.1" width="4" height="1.5" fill="#5f5f5f"/><ellipse cx="32.1" cy="24.3" rx="3.3" ry="4.1" stroke="#5f5f5f" stroke-width="1.9"/><path d="M35 26.3 L37 28.6" stroke="#5f5f5f" stroke-width="2.2"/></svg>
<div style="left:1935.2px;top:236.2px;width:31.6px;height:7.5px;background:#e7ad22;box-sizing:border-box;border:1px solid #c9c9d8;"></div>
<div style="left:1992.50px;top:213.93px;font-family:'Liberation Sans', sans-serif;font-size:23.5px;line-height:23.5px;font-weight:normal;color:#333;white-space:nowrap;letter-spacing:-0.650px;">Lápis</div>
<svg style="left:2057px;top:223px;" width="14" height="9" viewBox="0 0 14 9" fill="none"><path d="M0 0.3 H13.8 L6.9 7.8 Z" fill="#555"/></svg>
<svg style="left:2119px;top:152px;" width="48" height="50" viewBox="0 0 48 50" fill="none"><path d="M2.900000000000091 2.9000000000000057 H37.79999999999991 L45.09999999999991 10.200000000000006 V47.099999999999994 H2.900000000000091 Z" fill="#fff" stroke="#3b4a8f" stroke-width="1.8" stroke-linejoin="miter"/><path d="M37.79999999999991 2.9000000000000057 L45.09999999999991 10.200000000000006 H37.79999999999991 Z" fill="#3b4a8f" stroke="#3b4a8f" stroke-width="1.08" stroke-linejoin="miter"/><path d="M24.09999999999991 13.900000000000006 L32.80000000000018 22.599999999999994 L22.5 32.900000000000006 L13.800000000000182 24.19999999999999 Z" fill="#fd857c"/><path d="M15 23 L11 28.19999999999999 L16.800000000000182 34.400000000000006 H35.90000000000009 M16.800000000000182 34.400000000000006 L22.5 28.5" stroke="#fd857c" stroke-width="1.8" fill="none"/></svg>
<div style="left:2095.00px;top:221.53px;font-family:'Liberation Sans', sans-serif;font-size:23.5px;line-height:23.5px;font-weight:normal;color:#333;white-space:nowrap;letter-spacing:-0.321px;">Borracha</div>
<svg style="left:2189px;top:230px;" width="15" height="9" viewBox="0 0 15 9" fill="none"><path d="M0 0.5 H15 L7.5 8 Z" fill="#555"/></svg>
<svg style="left:2280px;top:146px;" width="60" height="62" viewBox="0 0 60 62" fill="none"><path d="M11.1 11 H42.2 L49 17.8 V50.9 H11.1 Z" fill="#fff" stroke="#3b4a8f" stroke-width="1.8"/><path d="M42.2 11 L49 17.8 H42.2 Z" fill="#3b4a8f"/><path d="M4 11 H11.1 V4 M49 50.9 H56 M49 50.9 V57.8" stroke="#3b4a8f" stroke-width="1.8"/><circle cx="21.1" cy="22.9" r="2.9" fill="#fd857c"/><path d="M16.8 45 L23.8 33.3 L29.4 38.8 L36.3 30.1 L43.3 45 Q43.6 45.9 42.6 45.9 H17.5 Q16.4 45.9 16.8 45 Z" fill="#fd857c" stroke="#fd857c" stroke-width="1.4" stroke-linejoin="round"/></svg>
<div style="left:2227.45px;top:219.22px;font-family:'Liberation Sans', sans-serif;font-size:23.5px;line-height:23.5px;font-weight:normal;color:#333;white-space:nowrap;letter-spacing:0.146px;">Captura de tela</div>
<svg style="left:2434px;top:150px;" width="52" height="52" viewBox="0 0 52 52" fill="none"><path d="M3.8 11.8 V3.8 H11.8 M39.2 3.8 H47.2 V11.8 M47.2 39.2 V47.2 H39.2 M11.8 47.2 H3.8 V39.2" stroke="#3b4a8f" stroke-width="1.8"/><rect x="9.9" y="9.7" width="33.2" height="33.5" fill="#fff" stroke="#3b4a8f" stroke-width="1.8"/><path d="M14.2 15.8 H24 M19.1 15.8 V23.8" stroke="#fd857c" stroke-width="1.8"/><path d="M14.2 29.1 H29.8 M14.2 35 H37.9" stroke="#3b4a8f" stroke-width="1.8"/></svg>
<div style="left:2435.50px;top:219.22px;font-family:'Liberation Sans', sans-serif;font-size:23.5px;line-height:23.5px;font-weight:normal;color:#333;white-space:nowrap;letter-spacing:-1.900px;">OCR</div>
<svg style="left:2542px;top:150px;" width="52" height="52" viewBox="0 0 52 52" fill="none"><path d="M4.7 3.8 H30.5 L37 10.3 V41.1 H4.7 Z" fill="#fff" stroke="#3b4a8f" stroke-width="1.8"/><path d="M14.7 9.3 H39.8 L47.2 16.6 V46.3 H14.7 Z" fill="#fff" stroke="#3b4a8f" stroke-width="1.8"/><rect x="14.7" y="9.3" width="23.9" height="32.2" fill="none" stroke="#fd857c" stroke-width="1.8"/></svg>
<div style="left:2527.00px;top:219.22px;font-family:'Liberation Sans', sans-serif;font-size:23.5px;line-height:23.5px;font-weight:normal;color:#333;white-space:nowrap;letter-spacing:0.167px;">Mesclar</div>
<svg style="left:2703.9px;top:149.9px;" width="48.19999999999982" height="50.099999999999994" viewBox="0 0 48.19999999999982 50.099999999999994" fill="none"><path d="M2.900000000000091 2.9000000000000057 H37.89999999999973 L45.29999999999973 10.300000000000006 V47.19999999999999 H2.900000000000091 Z" fill="#fff" stroke="#3b4a8f" stroke-width="1.8" stroke-linejoin="miter"/><path d="M37.89999999999973 2.9000000000000057 L45.29999999999973 10.300000000000006 H37.89999999999973 Z" fill="#3b4a8f" stroke="#3b4a8f" stroke-width="1.08" stroke-linejoin="miter"/><rect x="14.799999999999727" y="17.0" width="18.6" height="18.2" fill="none" stroke="#fd857c" stroke-width="1.8" stroke-dasharray="2 2"/><rect x="18.09999999999991" y="19.799999999999983" width="6" height="6" fill="#fd857c"/><rect x="24.09999999999991" y="26.299999999999983" width="6" height="6" fill="#fd857c"/></svg>
<div style="left:2655.00px;top:219.22px;font-family:'Liberation Sans', sans-serif;font-size:23.5px;line-height:23.5px;font-weight:normal;color:#333;white-space:nowrap;letter-spacing:0.291px;">Marca d'água</div>
<svg style="left:2800.5px;top:230px;" width="15.0" height="9" viewBox="0 0 15.0 9" fill="none"><path d="M0 0.5 H15.0 L7.5 8 Z" fill="#555"/></svg>
<svg style="left:2879.1px;top:150px;" width="47.80000000000018" height="49.900000000000006" viewBox="0 0 47.80000000000018 49.900000000000006" fill="none"><path d="M3.0 3.0 H37.20000000000018 L44.80000000000018 10.6 V46.900000000000006 H3.0 Z" fill="#fff" stroke="#3b4a8f" stroke-width="2" stroke-linejoin="miter"/><path d="M37.20000000000018 3.0 L44.80000000000018 10.6 H37.20000000000018 Z" fill="#3b4a8f" stroke="#3b4a8f" stroke-width="1.2" stroke-linejoin="miter"/><rect x="7.900000000000091" y="4.099999999999994" width="5.9" height="1.9" fill="#fd857c"/><rect x="13.800000000000182" y="6.099999999999994" width="6.1" height="1.9" fill="#fd857c"/><rect x="7.900000000000091" y="8.099999999999994" width="5.9" height="1.9" fill="#fd857c"/><rect x="13.800000000000182" y="10.099999999999994" width="6.1" height="1.9" fill="#fd857c"/><rect x="7.900000000000091" y="12.099999999999994" width="5.9" height="1.9" fill="#fd857c"/><rect x="13.800000000000182" y="14.099999999999994" width="6.1" height="1.9" fill="#fd857c"/><rect x="7.900000000000091" y="16.099999999999994" width="5.9" height="1.9" fill="#fd857c"/><rect x="13.800000000000182" y="18.099999999999994" width="6.1" height="1.9" fill="#fd857c"/><rect x="7.900000000000091" y="20.099999999999994" width="5.9" height="1.9" fill="#fd857c"/><rect x="13.800000000000182" y="22.099999999999994" width="6.1" height="1.9" fill="#fd857c"/><rect x="7.900000000000091" y="24.099999999999994" width="5.9" height="1.9" fill="#fd857c"/><rect x="13.800000000000182" y="26.099999999999994" width="6.1" height="1.9" fill="#fd857c"/></svg>
<div style="left:2845.35px;top:219.22px;font-family:'Liberation Sans', sans-serif;font-size:23.5px;line-height:23.5px;font-weight:normal;color:#333;white-space:nowrap;letter-spacing:0.669px;">Comprimir</div>
<div style="left:2995px;top:140px;width:51px;height:112px;overflow:hidden;"><svg style="position:absolute;left:32px;top:13px" width="30" height="44" viewBox="0 0 30 44"><rect x="1.9" y="1.9" width="26" height="40" fill="#fff" stroke="#3b4a8f" stroke-width="1.8"/><rect x="2.8" y="2.8" width="9" height="38.2" fill="#fd857c"/></svg><div style="position:absolute;left:4px;top:79.22px;font-family:'Liberation Sans',sans-serif;font-size:23.5px;line-height:23.5px;color:#333;white-space:nowrap;letter-spacing:0.8px">Comparar</div></div>
<div style="left:3046px;top:138px;width:25px;height:116px;background:#e4e4e4;"></div>
<svg style="left:3053px;top:188px;" width="12" height="16" viewBox="0 0 12 16" fill="none"><path d="M2.6 2.4 L9.3 8 L2.6 13.6" stroke="#555" stroke-width="1.9"/></svg>
<div style="left:0px;top:258px;width:3071px;height:1506px;background:#f2f3f5;"></div>
<div style="left:72px;top:258px;width:1px;height:1506px;background:#d6d6d8;"></div>
<div style="left:491px;top:258px;width:8px;height:1506px;background:linear-gradient(90deg,rgba(0,0,0,0),rgba(0,0,0,.07))"></div>
<div style="left:2540px;top:258px;width:8px;height:1506px;background:linear-gradient(270deg,rgba(0,0,0,0),rgba(0,0,0,.07))"></div>
<div style="left:499px;top:258px;width:2041px;height:1506px;background:#ffffff;"></div>
<div style="left:739.00px;top:336.30px;font-family:'Liberation Sans', sans-serif;font-size:46px;line-height:46px;font-weight:bold;color:#434343;white-space:nowrap;letter-spacing:0.339px;transform-origin:0 39.1px;transform:scaleY(1.065);">Notice and fees</div>
<div style="left:739.00px;top:868.10px;font-family:'Liberation Sans', sans-serif;font-size:46px;line-height:46px;font-weight:bold;color:#434343;white-space:nowrap;letter-spacing:0.375px;transform-origin:0 39.1px;transform:scaleY(1.065);">Refunds</div>
<div style="left:739.00px;top:1256.30px;font-family:'Liberation Sans', sans-serif;font-size:46px;line-height:46px;font-weight:bold;color:#434343;white-space:nowrap;letter-spacing:0.473px;transform-origin:0 39.1px;transform:scaleY(1.065);">Rescheduling</div>
<div style="left:858.00px;top:461.48px;font-family:'Liberation Serif', serif;font-size:39.9px;line-height:39.9px;color:#434343;white-space:nowrap;letter-spacing:0.0533px;transform-origin:0 33.12px;transform:scaleY(1.05)">Cancel within the free window and pay nothing.</div>
<div style="left:802px;top:473.5px;width:18px;height:18px;border-radius:50%;background:#434343"></div>
<div style="left:858.00px;top:531.18px;font-family:'Liberation Serif', serif;font-size:39.9px;line-height:39.9px;color:#434343;white-space:nowrap;letter-spacing:0.0500px;transform-origin:0 33.12px;transform:scaleY(1.05)">Cancel after the free window but before forty eight hours and pay nothing.</div>
<div style="left:802px;top:543.2px;width:18px;height:18px;border-radius:50%;background:#434343"></div>
<div style="left:858.00px;top:603.98px;font-family:'Liberation Serif', serif;font-size:39.9px;line-height:39.9px;color:#434343;white-space:nowrap;letter-spacing:0.0517px;transform-origin:0 33.12px;transform:scaleY(1.05)">Cancel within forty eight hours of the start and you will be charged. For a stay, the first</div>
<div style="left:802px;top:616.0px;width:18px;height:18px;border-radius:50%;background:#434343"></div>
<div style="left:858.50px;top:676.28px;font-family:'Liberation Serif', serif;font-size:39.9px;line-height:39.9px;color:#434343;white-space:nowrap;letter-spacing:0.0382px;transform-origin:0 33.12px;transform:scaleY(1.05)">night will be charged. For a one time service, fifty percent of the total will be charged.</div>
<div style="left:858.00px;top:749.48px;font-family:'Liberation Serif', serif;font-size:39.9px;line-height:39.9px;color:#434343;white-space:nowrap;letter-spacing:0.0483px;transform-origin:0 33.12px;transform:scaleY(1.05)">If you do not show up, the full cost for the first day or the full service fee will apply.</div>
<div style="left:802px;top:761.5px;width:18px;height:18px;border-radius:50%;background:#434343"></div>
<div style="left:858.25px;top:993.58px;font-family:'Liberation Serif', serif;font-size:39.9px;line-height:39.9px;color:#434343;white-space:nowrap;letter-spacing:0.0456px;transform-origin:0 33.12px;transform:scaleY(1.05)">Refunds are issued to the original payment method once cancellation is confirmed.</div>
<div style="left:802px;top:1005.6px;width:18px;height:18px;border-radius:50%;background:#434343"></div>
<div style="left:858.25px;top:1064.48px;font-family:'Liberation Serif', serif;font-size:39.9px;line-height:39.9px;color:#434343;white-space:nowrap;letter-spacing:0.0520px;transform-origin:0 33.12px;transform:scaleY(1.05)">Processing times depend on your bank or card issuer.</div>
<div style="left:802px;top:1076.5px;width:18px;height:18px;border-radius:50%;background:#434343"></div>
<div style="left:858.25px;top:1136.08px;font-family:'Liberation Serif', serif;font-size:39.9px;line-height:39.9px;color:#434343;white-space:nowrap;letter-spacing:0.0630px;transform-origin:0 33.12px;transform:scaleY(1.05)">Expected timing will be shown on the checkout page and in this policy.</div>
<div style="left:802px;top:1148.1px;width:18px;height:18px;border-radius:50%;background:#434343"></div>
<div style="left:859.00px;top:1380.98px;font-family:'Liberation Serif', serif;font-size:39.9px;line-height:39.9px;color:#434343;white-space:nowrap;letter-spacing:0.0440px;transform-origin:0 33.12px;transform:scaleY(1.05)">You may reschedule once without any fee if you request it at least forty eight hours</div>
<div style="left:802px;top:1393.0px;width:18px;height:18px;border-radius:50%;background:#434343"></div>
<div style="left:859.50px;top:1451.68px;font-family:'Liberation Serif', serif;font-size:39.9px;line-height:39.9px;color:#434343;white-space:nowrap;letter-spacing:-0.0219px;transform-origin:0 33.12px;transform:scaleY(1.05)">before the start.</div>
<div style="left:859.25px;top:1523.98px;font-family:'Liberation Serif', serif;font-size:39.9px;line-height:39.9px;color:#434343;white-space:nowrap;letter-spacing:0.0697px;transform-origin:0 33.12px;transform:scaleY(1.05)">A reschedule within forty eight hours will be treated as a late cancellation.</div>
<div style="left:802px;top:1536.0px;width:18px;height:18px;border-radius:50%;background:#434343"></div>
<div style="left:980px;top:455px;width:372px;height:50.5px;background:#fff93c;mix-blend-mode:multiply"></div>
<div style="left:980px;top:524.2px;width:794px;height:52.39999999999998px;background:#fff93c;mix-blend-mode:multiply"></div>
<div style="left:981px;top:598.1px;width:559px;height:50.5px;background:#fff93c;mix-blend-mode:multiply"></div>
<div style="left:1800px;top:1374px;width:399px;height:52px;background:#fff93c;mix-blend-mode:multiply"></div>
<div style="left:1079px;top:1518px;width:379px;height:50.90000000000009px;background:#fff93c;mix-blend-mode:multiply"></div>
<svg style="left:1505px;top:1712px;" width="25" height="40" viewBox="0 0 25 40" fill="none"><path d="M13.2 6 H17 V33.9 H13.2 V10.3 L6.3 13.6 L5.3 10.4 Z" fill="#0a0a0a"/></svg>
<svg style="left:16px;top:296px;" width="40" height="32" viewBox="0 0 40 32" fill="none"><path d="M4 6.3 H36 M4 16.6 H36 M4 26.8 H36" stroke="#444" stroke-width="1.8"/></svg>
<svg style="left:16px;top:372px;" width="40" height="40" viewBox="0 0 40 40" fill="none"><rect x="4.9" y="4.9" width="12" height="12" stroke="#444" stroke-width="1.7"/><rect x="22.8" y="4.9" width="12" height="12" stroke="#444" stroke-width="1.7"/><rect x="4.9" y="23.5" width="12" height="12" stroke="#444" stroke-width="1.7"/><rect x="22.8" y="23.5" width="12" height="12" stroke="#444" stroke-width="1.7"/></svg>
<svg style="left:16px;top:452px;" width="40" height="40" viewBox="0 0 40 40" fill="none"><path d="M33 5.9 L36.5 8.1 L27.6 22.8 L24.1 20.5 Z" fill="#444"/><path d="M23.4 24.1 L27 25.2 Q26.5 31.2 18.3 30.7 Q21.6 29 21.8 26.5 Z" fill="#444"/><path d="M3.9 14.9 C7.5 14.2 11.8 14.6 12.3 17.5 C12.8 20.5 9 22.5 7 25 C4.5 28 4.5 32 8.5 33.8 C12 35.3 17 35 20.5 35.1" stroke="#444" stroke-width="1.8" fill="none"/></svg>
<svg style="left:16px;top:532px;" width="40" height="40" viewBox="0 0 40 40" fill="none"><circle cx="18.2" cy="18.2" r="13.1" stroke="#444" stroke-width="1.8"/><path d="M27.5 27.5 L33.5 33.5" stroke="#444" stroke-width="1.9"/><path d="M11 16 A7.5 7.5 0 0 1 16.5 10.5" stroke="#444" stroke-width="1.6"/></svg>
<svg style="left:16px;top:612px;" width="40" height="40" viewBox="0 0 40 40" fill="none"><path d="M32.1 21.5 L20.8 32.8 A8.6 8.6 0 0 1 8.6 20.6 L20.5 8.7 A6.2 6.2 0 0 1 29.3 17.5 L17.6 29.2 A3.1 3.1 0 0 1 13.2 24.8 L25.6 12.4" stroke="#444" stroke-width="1.8" fill="none"/></svg>
<svg style="left:16px;top:690px;" width="46" height="46" viewBox="0 0 46 46" fill="none"><path d="M7 4.9 H24 L33.2 13 V24 M20 36.9 H7 V4.9" stroke="#444" stroke-width="1.8" fill="none" stroke-linejoin="round"/><path d="M24 4.9 V13 H33.2" stroke="#444" stroke-width="1.5" fill="none"/><circle cx="28.2" cy="31.4" r="8.6" fill="#f2f3f5" stroke="#444" stroke-width="1.8"/><path d="M27.5 27 V32.3 H32" stroke="#444" stroke-width="1.8" fill="none"/></svg>
<svg style="left:2976px;top:277px;" width="14" height="10" viewBox="0 0 14 10" fill="none"><path d="M0.6 9 L6.9 0.6 L13.2 9 Z" fill="#b9bcc3"/></svg>
<div style="left:2975px;top:492.7px;width:16px;height:261.3px;background:#d4d4d6;border-radius:8px;"></div>
<svg style="left:2976px;top:1734px;" width="14" height="10" viewBox="0 0 14 10" fill="none"><path d="M0.6 1 L6.9 9.2 L13.2 1 Z" fill="#b9bcc3"/></svg>
<div style="left:2999px;top:258px;width:1px;height:1506px;background:#d6d6d8;"></div>
<svg style="left:3016px;top:296px;" width="40" height="36" viewBox="0 0 40 36" fill="none"><circle cx="8" cy="9.9" r="3.9" stroke="#444" stroke-width="1.8"/><path d="M11.9 9.9 H36" stroke="#444" stroke-width="1.8"/><path d="M4 25.9 H21.8 M29.6 25.9 H36" stroke="#444" stroke-width="1.8"/><circle cx="25.7" cy="25.9" r="3.9" stroke="#444" stroke-width="1.8"/></svg>
<svg style="left:2856px;top:272px;" width="100" height="100" viewBox="0 0 100 100" fill="none"><defs><radialGradient id="gl" cx="0.52" cy="0.56" r="0.5"><stop offset="0.7" stop-color="#e9c9c4" stop-opacity=".9"/><stop offset="1" stop-color="#f2f3f5" stop-opacity="0"/></radialGradient></defs><circle cx="50" cy="51" r="47" fill="url(#gl)"/><circle cx="48" cy="47.4" r="39.3" fill="#fbb9b2"/><circle cx="48" cy="47.4" r="37.8" fill="#fdefeb"/><circle cx="48" cy="47.4" r="34" fill="#ee7366"/><rect x="34" y="34.3" width="23.8" height="23.4" rx="2" fill="#fcc3bd"/><rect x="38.2" y="37.8" width="23.8" height="24" rx="2.2" fill="#fff"/><path d="M41.9 43.5 H44.9 V52 L49.5 47 L54.2 52 V43.5 H57 V56.8 H54.5 L49.5 51.5 L44.5 56.8 H41.9 Z" fill="#ee7366"/><path d="M29 40.6 V29.2 Q29 28 30.2 28 H40" stroke="#fff" stroke-width="2.2" fill="none"/><path d="M39 24.3 L43.2 28 L39 31.7 Z" fill="#fff"/><path d="M66.7 54.9 V66.3 Q66.7 67.5 65.5 67.5 H56.5" stroke="#fff" stroke-width="2.2" fill="none"/><path d="M57.5 63.8 L53.3 67.5 L57.5 71.2 Z" fill="#fff"/></svg>
<div style="left:0px;top:1763px;width:3071px;height:2px;background:#c9c9c9;"></div>
<div style="left:0px;top:1765px;width:3071px;height:58px;background:#f0f0f0;"></div>
<div style="left:0px;top:1823px;width:3071px;height:1px;background:#fafafa;"></div>
<div style="left:0px;top:1824px;width:3071px;height:2px;background:#a9adb3;"></div>
<svg style="left:44.1px;top:1773.1px;" width="35.6" height="39.5" viewBox="0 0 35.6 39.5" fill="none"><path d="M4.299999999999997 2.7999999999999545 H26.800000000000004 L32.800000000000004 8.799999999999955 V35.200000000000045 Q32.800000000000004 36.700000000000045 31.300000000000004 36.700000000000045 H4.299999999999997 Q2.799999999999997 36.700000000000045 2.799999999999997 35.200000000000045 V4.2999999999999545 Q2.799999999999997 2.7999999999999545 4.299999999999997 2.7999999999999545 Z" fill="#fff" stroke="#8a8a8a" stroke-width="1.6"/><path d="M26.800000000000004 2.7999999999999545 L32.800000000000004 8.799999999999955 H26.800000000000004 Z" fill="#8a8a8a"/><path d="M11.899999999999999 20.90000000000009 H25.9" stroke="#c8c8c8" stroke-width="2"/><path d="M10.399999999999999 20.90000000000009 L15.899999999999999 15.900000000000091 V25.90000000000009 Z" fill="#c8c8c8"/></svg>
<svg style="left:104.4px;top:1773.1px;" width="35.29999999999998" height="39.5" viewBox="0 0 35.29999999999998 39.5" fill="none"><path d="M4.299999999999997 2.7999999999999545 H26.49999999999997 L32.49999999999997 8.799999999999955 V35.200000000000045 Q32.49999999999997 36.700000000000045 30.99999999999997 36.700000000000045 H4.299999999999997 Q2.799999999999997 36.700000000000045 2.799999999999997 35.200000000000045 V4.2999999999999545 Q2.799999999999997 2.7999999999999545 4.299999999999997 2.7999999999999545 Z" fill="#fff" stroke="#8a8a8a" stroke-width="1.6"/><path d="M26.49999999999997 2.7999999999999545 L32.49999999999997 8.799999999999955 H26.49999999999997 Z" fill="#8a8a8a"/><path d="M9.599999999999994 20.90000000000009 H23.599999999999994" stroke="#c8c8c8" stroke-width="2"/><path d="M25.099999999999994 20.90000000000009 L19.599999999999994 15.900000000000091 V25.90000000000009 Z" fill="#c8c8c8"/></svg>
<div style="left:156px;top:1775px;width:1px;height:35px;background:#fbfbfb;"></div>
<div style="left:194.20px;top:1782.93px;font-family:'Liberation Sans', sans-serif;font-size:23.5px;line-height:23.5px;font-weight:normal;color:#5f5f5f;white-space:nowrap;letter-spacing:0.260px;">Letter(8.5×11in)</div>
<svg style="left:1428px;top:1775px;" width="30" height="36" viewBox="0 0 30 36" fill="none"><path d="M3.7 2.8 V33.6 M27 2.8 L11 18.2 L27 33.6" stroke="#5a5a5a" stroke-width="2.1" fill="none"/></svg>
<svg style="left:1494px;top:1775px;" width="22" height="36" viewBox="0 0 22 36" fill="none"><path d="M19.6 2.8 L3.6 18.2 L19.6 33.6" stroke="#5a5a5a" stroke-width="2.1" fill="none"/></svg>
<div style="left:1540.8px;top:1775px;width:214.5px;height:36px;background:#ffffff;box-sizing:border-box;border:2px solid #e3e3e3;"></div>
<div style="left:1623.95px;top:1783.03px;font-family:'Liberation Sans', sans-serif;font-size:23.5px;line-height:23.5px;font-weight:normal;color:#333;white-space:nowrap;letter-spacing:0.475px;">1 / 3</div>
<svg style="left:1780px;top:1775px;" width="22" height="36" viewBox="0 0 22 36" fill="none"><path d="M2.8 2.8 L18.8 18.2 L2.8 33.6" stroke="#5a5a5a" stroke-width="2.1" fill="none"/></svg>
<svg style="left:1838px;top:1775px;" width="30" height="36" viewBox="0 0 30 36" fill="none"><path d="M26.3 2.8 V33.6 M2.8 2.8 L18.8 18.2 L2.8 33.6" stroke="#5a5a5a" stroke-width="2.1" fill="none"/></svg>
<div style="left:2143.5px;top:1777px;width:1px;height:33px;background:#fbfbfb;"></div>
<svg style="left:2163px;top:1773px;" width="36" height="39.700000000000045" viewBox="0 0 36 39.700000000000045" fill="none"><path d="M4.349999999999909 2.849999999999909 H26.15000000000009 L33.15000000000009 9.849999999999909 V35.350000000000136 Q33.15000000000009 36.850000000000136 31.65000000000009 36.850000000000136 H4.349999999999909 Q2.849999999999909 36.850000000000136 2.849999999999909 35.350000000000136 V4.349999999999909 Q2.849999999999909 2.849999999999909 4.349999999999909 2.849999999999909 Z" fill="#fff" stroke="#5f5f5f" stroke-width="1.7"/><path d="M26.15000000000009 2.849999999999909 L33.15000000000009 9.849999999999909 H26.15000000000009 Z" fill="#5f5f5f"/><path d="M9.5 14 L11.800000000000182 13 V27 M22.800000000000182 14 L25.09999999999991 13 V27" stroke="#fd857c" stroke-width="1.9"/><rect x="16.800000000000182" y="17" width="2" height="2" fill="#fd857c"/><rect x="16.800000000000182" y="22.5" width="2" height="2" fill="#fd857c"/></svg>
<svg style="left:2223.1px;top:1773px;" width="36.09999999999991" height="39.700000000000045" viewBox="0 0 36.09999999999991 39.700000000000045" fill="none"><path d="M4.349999999999909 2.849999999999909 H26.25 L33.25 9.849999999999909 V35.350000000000136 Q33.25 36.850000000000136 31.75 36.850000000000136 H4.349999999999909 Q2.849999999999909 36.850000000000136 2.849999999999909 35.350000000000136 V4.349999999999909 Q2.849999999999909 2.849999999999909 4.349999999999909 2.849999999999909 Z" fill="#fff" stroke="#5f5f5f" stroke-width="1.7"/><path d="M26.25 2.849999999999909 L33.25 9.849999999999909 H26.25 Z" fill="#5f5f5f"/><path d="M17.90000000000009 10 L27.90000000000009 20 L17.90000000000009 30 L7.900000000000091 20 Z" fill="#fd857c"/><rect x="13.099999999999909" y="15.200000000000045" width="9.6" height="9.6" fill="#fff"/></svg>
<svg style="left:2283.2px;top:1773px;" width="35.70000000000027" height="39.700000000000045" viewBox="0 0 35.70000000000027 39.700000000000045" fill="none"><path d="M4.349999999999909 2.849999999999909 H25.850000000000364 L32.850000000000364 9.849999999999909 V35.350000000000136 Q32.850000000000364 36.850000000000136 31.350000000000364 36.850000000000136 H4.349999999999909 Q2.849999999999909 36.850000000000136 2.849999999999909 35.350000000000136 V4.349999999999909 Q2.849999999999909 2.849999999999909 4.349999999999909 2.849999999999909 Z" fill="#fff" stroke="#5f5f5f" stroke-width="1.7"/><path d="M25.850000000000364 2.849999999999909 L32.850000000000364 9.849999999999909 H25.850000000000364 Z" fill="#5f5f5f"/><path d="M12.800000000000182 15 L7.800000000000182 20 L12.800000000000182 25 Z M22.800000000000182 15 L27.800000000000182 20 L22.800000000000182 25 Z" fill="#fd857c"/></svg>
<div style="left:2335.5px;top:1777px;width:1px;height:33px;background:#fbfbfb;"></div>
<div style="left:2348.9px;top:1769px;width:47.9px;height:47.7px;background:#e6e8ef;box-sizing:border-box;border:2px solid #c9cee0;"></div>
<svg style="left:2355px;top:1773px;" width="36" height="40" viewBox="0 0 36 40" fill="none"><rect x="3.15" y="3.25" width="30.1" height="7.3" rx="1.5" fill="#fff" stroke="#5f5f5f" stroke-width="1.7"/><path d="M4.6 15.25 H26.5 L33.25 21.5 V35.4 Q33.25 36.9 31.75 36.9 H4.6 Q3.15 36.9 3.15 35.4 V16.75 Q3.15 15.25 4.6 15.25 Z" fill="#fff" stroke="#5f5f5f" stroke-width="1.7"/><path d="M26.5 15.25 L33.25 21.5 H26.5 Z" fill="#5f5f5f"/><path d="M9 24.2 H21 M9 30.2 H19" stroke="#fd857c" stroke-width="1.8"/></svg>
<div style="left:2409px;top:1769px;width:47.9px;height:47.7px;background:#e6e8ef;box-sizing:border-box;border:2px solid #c9cee0;"></div>
<svg style="left:2415.4px;top:1773px;" width="35.5" height="39.700000000000045" viewBox="0 0 35.5 39.700000000000045" fill="none"><path d="M4.349999999999909 2.849999999999909 H25.65000000000009 L32.65000000000009 9.849999999999909 V35.350000000000136 Q32.65000000000009 36.850000000000136 31.15000000000009 36.850000000000136 H4.349999999999909 Q2.849999999999909 36.850000000000136 2.849999999999909 35.350000000000136 V4.349999999999909 Q2.849999999999909 2.849999999999909 4.349999999999909 2.849999999999909 Z" fill="#fff" stroke="#5f5f5f" stroke-width="1.7"/><path d="M25.65000000000009 2.849999999999909 L32.65000000000009 9.849999999999909 H25.65000000000009 Z" fill="#5f5f5f"/><path d="M10.099999999999909 15 H26.09999999999991 M10.099999999999909 21 H22.09999999999991 M10.099999999999909 27 H26.09999999999991" stroke="#fd857c" stroke-width="1.8"/></svg>
<svg style="left:2475.1px;top:1773px;" width="17.40000000000009" height="39.700000000000045" viewBox="0 0 17.40000000000009 39.700000000000045" fill="none"><path d="M4.349999999999909 2.849999999999909 H9.550000000000182 L14.550000000000182 7.849999999999909 V35.350000000000136 Q14.550000000000182 36.850000000000136 13.050000000000182 36.850000000000136 H4.349999999999909 Q2.849999999999909 36.850000000000136 2.849999999999909 35.350000000000136 V4.349999999999909 Q2.849999999999909 2.849999999999909 4.349999999999909 2.849999999999909 Z" fill="#fff" stroke="#5f5f5f" stroke-width="1.7"/><path d="M9.550000000000182 2.849999999999909 L14.550000000000182 7.849999999999909 H9.550000000000182 Z" fill="#5f5f5f"/><path d="M5.400000000000091 18.5 H11.900000000000091 M5.400000000000091 24.5 H11.900000000000091" stroke="#fd857c" stroke-width="1.8"/></svg>
<svg style="left:2493px;top:1773px;" width="17.59999999999991" height="39.700000000000045" viewBox="0 0 17.59999999999991 39.700000000000045" fill="none"><path d="M4.349999999999909 2.849999999999909 H9.75 L14.75 7.849999999999909 V35.350000000000136 Q14.75 36.850000000000136 13.25 36.850000000000136 H4.349999999999909 Q2.849999999999909 36.850000000000136 2.849999999999909 35.350000000000136 V4.349999999999909 Q2.849999999999909 2.849999999999909 4.349999999999909 2.849999999999909 Z" fill="#fff" stroke="#5f5f5f" stroke-width="1.7"/><path d="M9.75 2.849999999999909 L14.75 7.849999999999909 H9.75 Z" fill="#5f5f5f"/><path d="M5.5 18.5 H12 M5.5 24.5 H12" stroke="#fd857c" stroke-width="1.8"/></svg>
<div style="left:2522px;top:1777px;width:1px;height:33px;background:#fbfbfb;"></div>
<div style="left:2547.85px;top:1782.73px;font-family:'Liberation Sans', sans-serif;font-size:23.5px;line-height:23.5px;font-weight:normal;color:#555;white-space:nowrap;letter-spacing:-0.267px;">125%</div>
<svg style="left:2618px;top:1787px;" width="18" height="11" viewBox="0 0 18 11" fill="none"><path d="M0.8 1 H17.8 L9.3 10 Z" fill="#5a5a5a"/></svg>
<svg style="left:2666px;top:1773px;" width="40" height="40" viewBox="0 0 40 40" fill="none"><circle cx="20" cy="19.7" r="16.3" fill="#fff" stroke="#666" stroke-width="1.9"/><path d="M11 19.7 H29" stroke="#5f5f5f" stroke-width="4"/></svg>
<div style="left:2726px;top:1790px;width:180px;height:5.7px;background:#c9c9c9;"></div>
<div style="left:2726px;top:1790px;width:94px;height:5.7px;background:#666666;"></div>
<svg style="left:2808px;top:1780px;" width="24" height="26" viewBox="0 0 24 26" fill="none"><ellipse cx="12" cy="12.8" rx="9.3" ry="10.5" fill="#fff" stroke="#666" stroke-width="1.8"/></svg>
<svg style="left:2926px;top:1773px;" width="40" height="40" viewBox="0 0 40 40" fill="none"><circle cx="20" cy="19.7" r="16.3" fill="#fff" stroke="#666" stroke-width="1.9"/><path d="M11 19.7 H29 M20 10.7 V28.7" stroke="#5f5f5f" stroke-width="4"/></svg>
<svg style="left:2994px;top:1775px;" width="36" height="36" viewBox="0 0 36 36" fill="none"><path d="M2 2 H11.5 L2 11.5 Z M34 2 H24.5 L34 11.5 Z M2 34 H11.5 L2 24.5 Z M34 34 H24.5 L34 24.5 Z" fill="#666" stroke="#666" stroke-width="1.2" stroke-linejoin="round"/><path d="M18 13.5 L22.5 18 L18 22.5 L13.5 18 Z" fill="#fd857c" stroke="#fd857c" stroke-width="1" stroke-linejoin="round"/></svg>
</body></html>
